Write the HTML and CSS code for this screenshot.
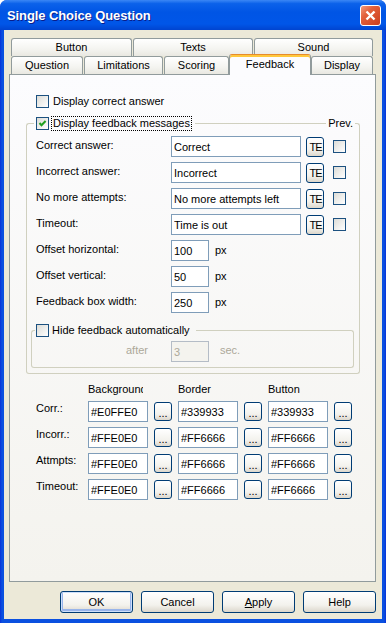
FILE: index.html
```html
<!DOCTYPE html>
<html lang="en">
<head>
    <meta charset="UTF-8">
    <meta name="viewport" content="width=device-width, initial-scale=1.0">
    <title>Single Choice Question</title>
    <link rel="stylesheet" href="styles.css">
</head>
<body>
<div class="window">
    <div class="titlebar">
        <span class="title">Single Choice Question</span>
        <button class="close" type="button" aria-label="Close">
            <svg width="11" height="11" viewBox="0 0 11 11"><path d="M1.5 1.5 L9.5 9.5 M9.5 1.5 L1.5 9.5" stroke="#fff" stroke-width="2.4"/></svg>
        </button>
    </div>

    <div class="client">
        <div class="tabs">
            <div class="tabrow">
                <div class="tab t-button">Button</div>
                <div class="tab t-texts">Texts</div>
                <div class="tab t-sound">Sound</div>
            </div>
            <div class="tabrow front">
                <div class="tab t-question">Question</div>
                <div class="tab t-limits">Limitations</div>
                <div class="tab t-scoring">Scoring</div>
                <div class="tab t-feedback active">Feedback</div>
                <div class="tab t-display">Display</div>
            </div>
        </div>

        <div class="panel">
            <label class="check top-check"><span class="box"></span>Display correct answer</label>

            <div class="group main">
                <div class="group-head">
                    <span class="corner left"></span>
                    <label class="check legend">
                        <span class="box">
                            <svg width="11" height="11" viewBox="0 0 11 11"><polyline points="2.5,5 4.5,7.2 8.6,3" fill="none" stroke="#21a121" stroke-width="2"/></svg>
                        </span>
                        <span class="focus">Display feedback messages</span>
                    </label>
                    <span class="line"></span>
                    <span class="note">Prev.</span>
                    <span class="corner right"></span>
                </div>

                <div class="group-body">
                    <div class="field">
                        <span class="label">Correct answer:</span>
                        <input class="edit" type="text" value="Correct" readonly>
                        <button class="btn small" type="button">TE</button>
                        <span class="box prev"></span>
                    </div>
                    <div class="field">
                        <span class="label">Incorrect answer:</span>
                        <input class="edit" type="text" value="Incorrect" readonly>
                        <button class="btn small" type="button">TE</button>
                        <span class="box prev"></span>
                    </div>
                    <div class="field">
                        <span class="label">No more attempts:</span>
                        <input class="edit" type="text" value="No more attempts left" readonly>
                        <button class="btn small" type="button">TE</button>
                        <span class="box prev"></span>
                    </div>
                    <div class="field">
                        <span class="label">Timeout:</span>
                        <input class="edit" type="text" value="Time is out" readonly>
                        <button class="btn small" type="button">TE</button>
                        <span class="box prev"></span>
                    </div>
                    <div class="field">
                        <span class="label">Offset horizontal:</span>
                        <span class="unit"><input class="edit short" type="text" value="100" readonly>px</span>
                    </div>
                    <div class="field">
                        <span class="label">Offset vertical:</span>
                        <span class="unit"><input class="edit short" type="text" value="50" readonly>px</span>
                    </div>
                    <div class="field">
                        <span class="label">Feedback box width:</span>
                        <span class="unit"><input class="edit short" type="text" value="250" readonly>px</span>
                    </div>

                    <div class="group sub">
                        <div class="group-head">
                            <span class="corner left small"></span>
                            <label class="check legend"><span class="box"></span><span class="plain">Hide feedback automatically</span></label>
                            <span class="line"></span>
                            <span class="corner right small"></span>
                        </div>
                        <div class="group-body">
                            <div class="after-row">
                                <span class="after">after</span>
                                <input class="edit short" type="text" value="3" disabled>
                                <span class="sec">sec.</span>
                            </div>
                        </div>
                    </div>
                </div>
            </div>

            <div class="colors">
                <div class="crow head">
                    <span class="c-bg"><span class="clip">Background</span></span>
                    <span class="c-border">Border</span>
                    <span class="c-button">Button</span>
                </div>
                <div class="crow">
                    <span class="label">Corr.:</span>
                    <input class="edit color" type="text" value="#E0FFE0" readonly>
                    <button class="btn dots" type="button">...</button>
                    <input class="edit color" type="text" value="#339933" readonly>
                    <button class="btn dots" type="button">...</button>
                    <input class="edit color" type="text" value="#339933" readonly>
                    <button class="btn dots" type="button">...</button>
                </div>
                <div class="crow">
                    <span class="label">Incorr.:</span>
                    <input class="edit color" type="text" value="#FFE0E0" readonly>
                    <button class="btn dots" type="button">...</button>
                    <input class="edit color" type="text" value="#FF6666" readonly>
                    <button class="btn dots" type="button">...</button>
                    <input class="edit color" type="text" value="#FF6666" readonly>
                    <button class="btn dots" type="button">...</button>
                </div>
                <div class="crow">
                    <span class="label">Attmpts:</span>
                    <input class="edit color" type="text" value="#FFE0E0" readonly>
                    <button class="btn dots" type="button">...</button>
                    <input class="edit color" type="text" value="#FF6666" readonly>
                    <button class="btn dots" type="button">...</button>
                    <input class="edit color" type="text" value="#FF6666" readonly>
                    <button class="btn dots" type="button">...</button>
                </div>
                <div class="crow">
                    <span class="label">Timeout:</span>
                    <input class="edit color" type="text" value="#FFE0E0" readonly>
                    <button class="btn dots" type="button">...</button>
                    <input class="edit color" type="text" value="#FF6666" readonly>
                    <button class="btn dots" type="button">...</button>
                    <input class="edit color" type="text" value="#FF6666" readonly>
                    <button class="btn dots" type="button">...</button>
                </div>
            </div>
        </div>

        <div class="buttons">
            <button class="btn main-btn default" type="button">OK</button>
            <button class="btn main-btn" type="button">Cancel</button>
            <button class="btn main-btn" type="button"><u>A</u>pply</button>
            <button class="btn main-btn" type="button">Help</button>
        </div>
    </div>
</div>
</body>
</html>
```

FILE: styles.css
```css
* {
    box-sizing: border-box;
}

html, body {
    margin: 0;
}

body {
    background: #fff;
    color: #000;
    font: 11px/13px "Liberation Sans", Arial, sans-serif;
}

/* window frame */
.window {
    width: 386px;
    height: 623px;
    display: flex;
    flex-direction: column;
    border-radius: 7px 7px 0 0;
    overflow: hidden;
    background: linear-gradient(90deg, #0831d9, #0a50e0 2px, #0a50e0 calc(100% - 2px), #0831d9);
}

.titlebar {
    height: 30px;
    display: flex;
    align-items: center;
    padding: 0 5px 0 7px;
    background: linear-gradient(#3b87f5 0%, #0c62ea 12%, #0055e5 40%, #0056e8 80%, #0044d0 100%);
}

.title {
    flex: 1;
    color: #fff;
    font: bold 13px "Liberation Sans", Arial, sans-serif;
    letter-spacing: -0.1px;
    text-shadow: 1px 1px 0 #0a1d8a;
    padding-top: 1px;
}

.close {
    width: 21px;
    height: 21px;
    padding: 0;
    display: flex;
    align-items: center;
    justify-content: center;
    border: 1px solid #fff;
    border-radius: 3px;
    background: linear-gradient(135deg, #f29a7c 0%, #e2603b 35%, #cc3e1d 100%);
}

.client {
    flex: 1;
    margin: 0 4px 4px;
    background: #ece9d8;
    display: flex;
    flex-direction: column;
}

/* tabs */
.tabs {
    padding: 8px 0 0 7px;
}

.tabrow {
    display: flex;
    gap: 1px;
    height: 18px;
}

.tabrow.front {
    align-items: flex-end;
}

.tab {
    height: 18px;
    border: 1px solid #919b9c;
    border-bottom: 0;
    border-radius: 3px 3px 0 0;
    background: linear-gradient(#ffffff, #f4f4f0 60%, #e9e8e1);
    display: flex;
    align-items: center;
    justify-content: center;
}

.tab.active {
    height: 21px;
    margin: 0 -1px -1px -1px;
    border-top: 1px solid #e68b2c;
    box-shadow: inset 0 2px 0 #ffc83c;
    background: #fcfcfe;
    padding-bottom: 2px;
    position: relative;
    z-index: 1;
}

.t-button { width: 121px; }
.t-texts { width: 120px; }
.t-sound { width: 119px; }
.t-question { width: 72px; }
.t-limits { width: 79px; }
.t-scoring { width: 65px; }
.t-feedback { width: 82px; }
.t-display { width: 62px; }

/* tab page */
.panel {
    height: 508px;
    margin: 0 6px 0 5px;
    border: 1px solid #919b9c;
    background: linear-gradient(#fcfcfe, #f4f3ee);
}

.check {
    display: flex;
    align-items: center;
}

.box {
    width: 13px;
    height: 13px;
    flex: none;
    border: 1px solid #1c5180;
    background: linear-gradient(135deg, #dcdcd7, #ffffff);
}

.box svg {
    display: block;
}

.top-check {
    height: 13px;
    margin: 20px 0 0 26px;
    gap: 4px;
}

/* group boxes */
.group.main {
    margin: 8px 15px 0 16px;
}

.group-head {
    display: flex;
    align-items: center;
    height: 15px;
}

.corner {
    align-self: flex-end;
    height: 8px;
    border-top: 1px solid #d0d0bf;
}

.corner.left {
    width: 8px;
    border-left: 1px solid #d0d0bf;
    border-top-left-radius: 3px;
}

.corner.right {
    width: 5px;
    border-right: 1px solid #d0d0bf;
    border-top-right-radius: 3px;
}

.corner.small {
    width: 4px;
}

.legend {
    margin-left: 2px;
}

.focus {
    margin-left: 2px;
    padding: 0 1px;
    border: 1px dotted #000;
}

.line {
    flex: 1;
    height: 1px;
    background: #d0d0bf;
    margin: 0 2px 0 3px;
}

.note {
    margin-right: 2px;
}

.group-body {
    border: 1px solid #d0d0bf;
    border-top: 0;
    border-radius: 0 0 3px 3px;
    padding: 5px 5px 5px 4px;
    display: flex;
    flex-direction: column;
    gap: 5px;
}

.field {
    height: 21px;
    padding-left: 5px;
    display: grid;
    grid-template-columns: 130px 130px 18px 13px;
    column-gap: 5px;
    align-items: center;
}

.label {
    margin-top: -2px;
}

.edit {
    height: 21px;
    width: 130px;
    margin: 0;
    padding: 0 2px;
    border: 1px solid #7f9db9;
    background: #fff;
    color: #000;
    font: inherit;
    outline: none;
}

.edit.short {
    width: 38px;
}

.edit.color {
    width: 60px;
}

.edit:disabled {
    border-color: #b4bcc6;
    background: #f4f3ee;
    color: #aca899;
}

.unit {
    display: flex;
    align-items: center;
    gap: 6px;
}

.btn {
    margin: 0;
    padding: 0;
    border: 1px solid #003c74;
    border-radius: 3px;
    background: linear-gradient(#ffffff, #f3f2ed 65%, #dcd7cc);
    color: #000;
    font: inherit;
}

.btn.small {
    width: 18px;
    height: 20px;
    line-height: 18px;
    letter-spacing: -1px;
    text-indent: 1px;
    overflow: visible;
    white-space: nowrap;
}

.box.prev {
    margin-left: 4px;
}

.group.sub {
    margin-top: 5px;
}

.group.sub .legend {
    margin-left: 1px;
}

.plain {
    margin-left: 3px;
}

.group.sub .line {
    margin: 0;
    margin-left: 6px;
}

.group.sub .group-body {
    padding: 3px 0 5px 4px;
}

.after-row {
    height: 21px;
    display: grid;
    grid-template-columns: 130px 38px auto;
    column-gap: 5px;
    align-items: center;
    color: #aca899;
}

.after {
    text-align: right;
    padding-right: 18px;
    margin-top: -2px;
}

.sec {
    padding-left: 6px;
    margin-top: -2px;
}

/* colour table */
.colors {
    margin: 9px 0 0 26px;
    display: flex;
    flex-direction: column;
    gap: 5px;
}

.crow {
    display: grid;
    grid-template-columns: 46px repeat(3, 60px 18px);
    column-gap: 6px;
    height: 21px;
    align-items: center;
}

.crow.head {
    height: 13px;
}

.crow .label {
    align-self: start;
    margin-top: 0;
    line-height: 14px;
}

.c-bg {
    grid-column: 2;
}

.clip {
    display: block;
    width: 55px;
    overflow: hidden;
    white-space: nowrap;
}

.c-border {
    grid-column: 4;
}

.c-button {
    grid-column: 6;
}

.btn.dots {
    width: 18px;
    height: 19px;
    line-height: 20px;
}

/* dialog buttons */
.buttons {
    display: flex;
    justify-content: flex-end;
    gap: 8px;
    margin-top: 9px;
    padding-right: 6px;
}

.main-btn {
    width: 73px;
    height: 22px;
}

.main-btn.default {
    box-shadow: inset 0 0 0 1px #cee0fb, inset 0 -1px 0 2px #98b4ea;
}
```
